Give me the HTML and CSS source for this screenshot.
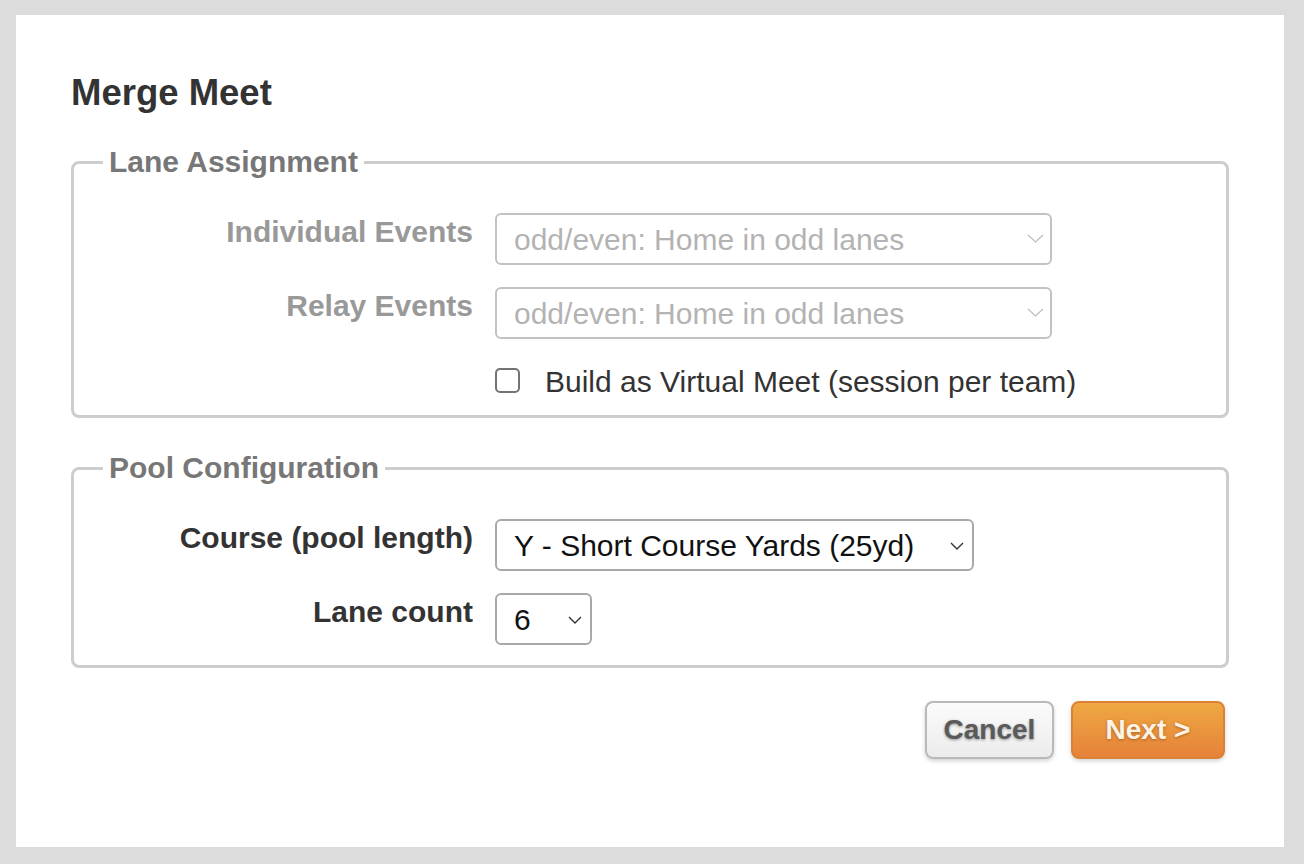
FILE: index.html
```html
<!DOCTYPE html>
<html lang="en">
<head>
<meta charset="utf-8">
<title>Merge Meet</title>
<link rel="stylesheet" href="styles.css">
</head>
<body>
<div class="panel">
  <h1 class="title">Merge Meet</h1>

  <fieldset class="group">
    <legend class="group-legend">Lane Assignment</legend>
    <div class="form-grid">
      <label class="field-label is-disabled">Individual Events</label>
      <div class="select-wrap">
        <select class="select select-wide" disabled>
          <option>odd/even: Home in odd lanes</option>
        </select>
        <svg class="chevron chevron-disabled" width="17" height="9" viewBox="0 0 17 9"><path d="M1 1 L8.5 8 L16 1" fill="none" stroke="currentColor" stroke-width="1.2"/></svg>
      </div>

      <label class="field-label is-disabled">Relay Events</label>
      <div class="select-wrap">
        <select class="select select-wide" disabled>
          <option>odd/even: Home in odd lanes</option>
        </select>
        <svg class="chevron chevron-disabled" width="17" height="9" viewBox="0 0 17 9"><path d="M1 1 L8.5 8 L16 1" fill="none" stroke="currentColor" stroke-width="1.2"/></svg>
      </div>

      <span class="spacer"></span>
      <label class="check-row">
        <input type="checkbox" class="check">
        <span class="check-text">Build as Virtual Meet (session per team)</span>
      </label>
    </div>
  </fieldset>

  <fieldset class="group group-pool">
    <legend class="group-legend">Pool Configuration</legend>
    <div class="form-grid">
      <label class="field-label">Course (pool length)</label>
      <div class="select-wrap">
        <select class="select select-course">
          <option>Y - Short Course Yards (25yd)</option>
        </select>
        <svg class="chevron chevron-enabled" width="14" height="8" viewBox="0 0 14 8"><path d="M1 1 L7 7 L13 1" fill="none" stroke="currentColor" stroke-width="1.4"/></svg>
      </div>

      <label class="field-label">Lane count</label>
      <div class="select-wrap">
        <select class="select select-lane">
          <option>6</option>
        </select>
        <svg class="chevron chevron-enabled" width="14" height="8" viewBox="0 0 14 8"><path d="M1 1 L7 7 L13 1" fill="none" stroke="currentColor" stroke-width="1.4"/></svg>
      </div>
    </div>
  </fieldset>

  <div class="actions">
    <button class="btn btn-cancel">Cancel</button>
    <button class="btn btn-next">Next &gt;</button>
  </div>
</div>
</body>
</html>
```

FILE: styles.css
```css
html, body {
  margin: 0;
}

body {
  background: #dcdcdc;
  padding: 15px 20px 17px 16px;
  font-family: "Liberation Sans", Arial, Helvetica, sans-serif;
  color: #333;
}

.panel {
  background: #fff;
  height: 832px;
  box-sizing: border-box;
  padding: 57px 55px 0 55px;
}

.title {
  margin: 0;
  font-size: 36.5px;
  line-height: 42px;
  font-weight: bold;
  color: #333;
}

.group {
  margin: 31px 0 0 0;
  border: 3px solid #cdcdcd;
  border-radius: 8px;
  padding: 0 0 15px 0;
  min-width: 0;
}

.group-pool {
  margin-top: 33px;
  padding-bottom: 20px;
}

.group-legend {
  margin-left: 29px;
  padding: 0 6px;
  font-size: 30px;
  line-height: 34px;
  font-weight: bold;
  color: #777;
}

.form-grid {
  display: grid;
  grid-template-columns: 399px auto;
  column-gap: 22px;
  row-gap: 22px;
  padding-top: 34px;
  justify-items: start;
  align-items: start;
}

.field-label {
  justify-self: end;
  text-align: right;
  padding-top: 2px;
  font-size: 30px;
  line-height: 34px;
  font-weight: bold;
  color: #333;
}

.field-label.is-disabled {
  color: #999;
}

.select-wrap {
  position: relative;
  display: inline-block;
}

.select {
  -webkit-appearance: none;
  appearance: none;
  display: block;
  box-sizing: border-box;
  height: 52px;
  margin: 0;
  padding: 0 0 0 17px;
  border: 2px solid #a9a9a9;
  border-radius: 6px;
  background: #fff;
  font-family: "Liberation Sans", Arial, Helvetica, sans-serif;
  font-size: 30px;
  color: #111;
}

.select:disabled {
  border-color: #c2c2c2;
  color: #b3b3b3;
  opacity: 1;
}

.select-wide {
  width: 557px;
}

.select-course {
  width: 479px;
}

.select-lane {
  width: 97px;
}

.chevron {
  position: absolute;
  pointer-events: none;
}

.chevron-disabled {
  right: 8px;
  top: 21px;
  color: #bdbdbd;
}

.chevron-enabled {
  right: 10px;
  top: 23px;
  color: #333;
}

.spacer {
  display: block;
}

.check-row {
  display: flex;
  align-items: center;
  gap: 25px;
  font-size: 30px;
  line-height: 36px;
  color: #333;
}

.check-text {
  padding-top: 3px;
}

.check {
  -webkit-appearance: none;
  appearance: none;
  width: 25px;
  height: 25px;
  margin: 0;
  box-sizing: border-box;
  border: 2px solid #737373;
  border-radius: 5px;
  background: #fff;
}

.actions {
  display: flex;
  justify-content: flex-end;
  gap: 17px;
  margin-top: 33px;
  padding-right: 4px;
}

.btn {
  box-sizing: border-box;
  height: 58px;
  border-radius: 8px;
  font-family: "Liberation Sans", Arial, Helvetica, sans-serif;
  font-size: 28px;
  font-weight: bold;
  padding: 0;
  box-shadow: 0 2px 4px rgba(0, 0, 0, 0.18);
}

.btn-cancel {
  width: 129px;
  border: 2px solid #b9b9b9;
  background: linear-gradient(#fbfbfb, #ececec);
  color: #5a5a5a;
  text-shadow: 0 1px 3px rgba(0, 0, 0, 0.4);
}

.btn-next {
  width: 154px;
  border: 2px solid #db8236;
  background: linear-gradient(#eea843, #e6823a);
  color: #fdf3e6;
  text-shadow: 0 1px 3px rgba(120, 60, 0, 0.55);
}
```
